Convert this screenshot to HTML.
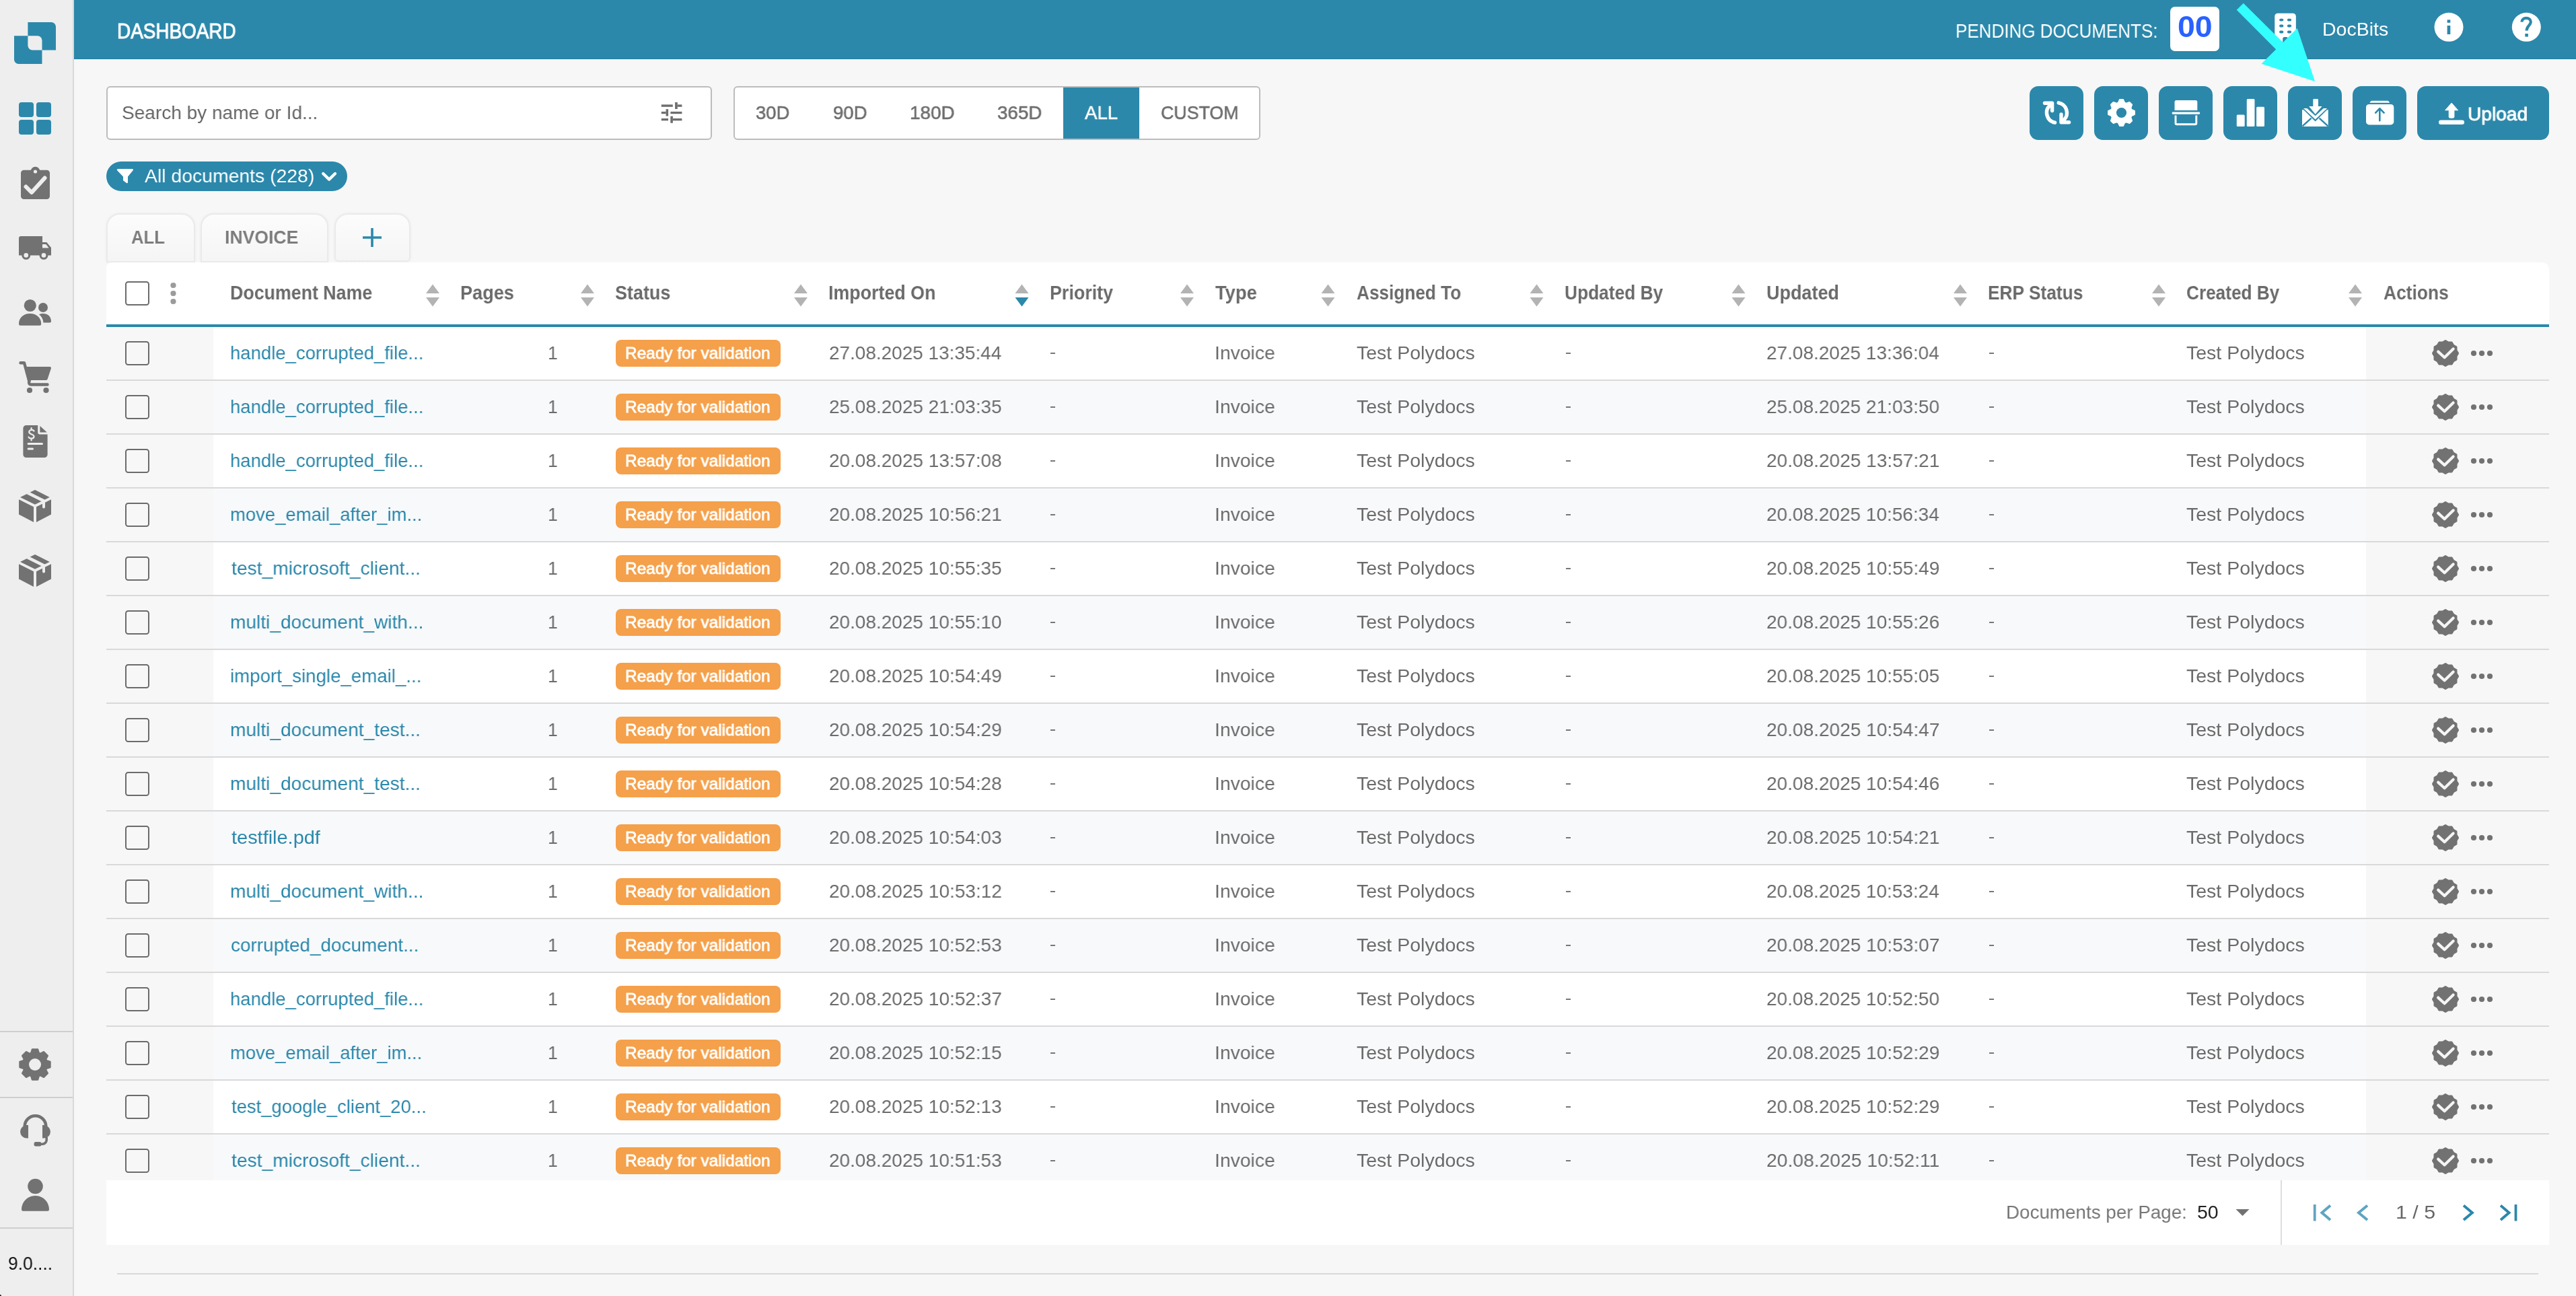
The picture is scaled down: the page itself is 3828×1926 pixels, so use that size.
<!DOCTYPE html>
<html><head><meta charset="utf-8"><title>Dashboard</title>
<style>
html,body{margin:0;padding:0;background:#f7f7f7;}
body{width:3828px;height:1926px;overflow:hidden;background:#f7f7f7;position:relative;font-family:"Liberation Sans",sans-serif;}
.r{position:absolute;box-sizing:border-box;}
.t{position:absolute;white-space:nowrap;transform-origin:0 50%;will-change:transform;font-family:"Liberation Sans",sans-serif;}
svg.ov{position:absolute;left:0;top:0;}
</style></head><body>
<div class="r" style="left:0px;top:0px;width:110px;height:1926px;background:#eeeeee;border-right:2px solid #d9d9d9;"></div>
<div class="r" style="left:0px;top:1532px;width:108px;height:2px;background:#cfcfcf;"></div>
<div class="r" style="left:0px;top:1630px;width:108px;height:2px;background:#cfcfcf;"></div>
<div class="r" style="left:0px;top:1824px;width:108px;height:2px;background:#cfcfcf;"></div>
<span class="t" style="left:11.78px;top:1865.14px;font-size:27px;line-height:27px;color:#111;transform:scaleX(0.9788);">9.0....</span>
<div class="r" style="left:110px;top:0px;width:3718px;height:88px;background:#2b88ab;"></div>
<div class="r" style="left:110px;top:87px;width:3718px;height:1px;background:#227fa3;"></div>
<span class="t" style="left:173.71px;top:31.01px;font-size:31px;line-height:31px;color:#fff;transform:scaleX(0.8994);-webkit-text-stroke:1.0px #fff;">DASHBOARD</span>
<span class="t" style="left:2905.62px;top:31.43px;font-size:29.5px;line-height:29.5px;color:#fff;transform:scaleX(0.8815);">PENDING DOCUMENTS:</span>
<div class="r" style="left:3225px;top:10px;width:73px;height:66px;background:#fff;border-radius:7px;"></div>
<span class="t" style="left:3235.69px;top:18.25px;font-size:44px;line-height:44px;color:#2962ff;font-weight:bold;transform:scaleX(1.0561);">00</span>
<span class="t" style="left:3451.17px;top:29.12px;font-size:28.5px;line-height:28.5px;color:#fff;transform:scaleX(0.9966);">DocBits</span>
<div class="r" style="left:158px;top:128px;width:900px;height:80px;background:#fff;border:2px solid #bcbcbc;border-radius:6px;"></div>
<span class="t" style="left:181.24px;top:152.87px;font-size:28.5px;line-height:28.5px;color:#666;transform:scaleX(0.9834);">Search by name or Id...</span>
<div class="r" style="left:1090px;top:128px;width:783px;height:80px;background:#fff;border:2px solid #bcbcbc;border-radius:6px;"></div>
<div class="r" style="left:1580px;top:130px;width:113px;height:76px;background:#2b88ab;"></div>
<span class="t" style="left:1123.46px;top:152.62px;font-size:28.5px;line-height:28.5px;color:#6e6e6e;transform:scaleX(0.9630);-webkit-text-stroke:0.6px #6e6e6e;">30D</span>
<span class="t" style="left:1237.73px;top:152.62px;font-size:28.5px;line-height:28.5px;color:#6e6e6e;transform:scaleX(0.9674);-webkit-text-stroke:0.6px #6e6e6e;">90D</span>
<span class="t" style="left:1351.63px;top:152.62px;font-size:28.5px;line-height:28.5px;color:#6e6e6e;transform:scaleX(0.9790);-webkit-text-stroke:0.6px #6e6e6e;">180D</span>
<span class="t" style="left:1481.94px;top:152.62px;font-size:28.5px;line-height:28.5px;color:#6e6e6e;transform:scaleX(0.9742);-webkit-text-stroke:0.6px #6e6e6e;">365D</span>
<span class="t" style="left:1612.44px;top:152.62px;font-size:28.5px;line-height:28.5px;color:#fff;transform:scaleX(0.9707);-webkit-text-stroke:0.6px #fff;">ALL</span>
<span class="t" style="left:1724.66px;top:152.62px;font-size:28.5px;line-height:28.5px;color:#6e6e6e;transform:scaleX(0.9395);-webkit-text-stroke:0.6px #6e6e6e;">CUSTOM</span>
<div class="r" style="left:3016px;top:128px;width:80px;height:80px;background:#2b88ab;border-radius:13px;"></div>
<div class="r" style="left:3112px;top:128px;width:80px;height:80px;background:#2b88ab;border-radius:13px;"></div>
<div class="r" style="left:3208px;top:128px;width:80px;height:80px;background:#2b88ab;border-radius:13px;"></div>
<div class="r" style="left:3304px;top:128px;width:80px;height:80px;background:#2b88ab;border-radius:13px;"></div>
<div class="r" style="left:3400px;top:128px;width:80px;height:80px;background:#2b88ab;border-radius:13px;"></div>
<div class="r" style="left:3496px;top:128px;width:80px;height:80px;background:#2b88ab;border-radius:13px;"></div>
<div class="r" style="left:3592px;top:128px;width:196px;height:80px;background:#2b88ab;border-radius:13px;"></div>
<span class="t" style="left:3667.23px;top:154.87px;font-size:28.5px;line-height:28.5px;color:#fff;transform:scaleX(0.9873);-webkit-text-stroke:0.9px #fff;">Upload</span>
<div class="r" style="left:158px;top:240px;width:358px;height:44px;background:#2b88ab;border-radius:22px;"></div>
<span class="t" style="left:214.94px;top:246.87px;font-size:28.5px;line-height:28.5px;color:#fff;transform:scaleX(0.9955);">All documents (228)</span>
<div class="r" style="left:158px;top:316.5px;width:131.5px;height:73.5px;background:;background:linear-gradient(#fcfcfc,#f5f5f5);border:2.5px solid #eaeaea;box-shadow:0 0 4px rgba(0,0,0,0.05);border-radius:20px 20px 0 0;"></div>
<div class="r" style="left:298px;top:316.5px;width:190px;height:73.5px;background:;background:linear-gradient(#fcfcfc,#f5f5f5);border:2.5px solid #eaeaea;box-shadow:0 0 4px rgba(0,0,0,0.05);border-radius:20px 20px 0 0;"></div>
<div class="r" style="left:496.5px;top:316.5px;width:113px;height:72px;background:;background:linear-gradient(#fcfcfc,#f5f5f5);border:2.5px solid #eaeaea;box-shadow:0 0 4px rgba(0,0,0,0.05);border-radius:20px 20px 6px 6px;"></div>
<span class="t" style="left:195.38px;top:338.27px;font-size:28.5px;line-height:28.5px;color:#7c7c7c;font-weight:bold;transform:scaleX(0.9004);">ALL</span>
<span class="t" style="left:334.25px;top:338.27px;font-size:28.5px;line-height:28.5px;color:#7c7c7c;font-weight:bold;transform:scaleX(0.9326);">INVOICE</span>
<div class="r" style="left:158px;top:390px;width:3630px;height:92px;background:#fff;border-radius:8px 10px 0 0;"></div>
<div class="r" style="left:158px;top:482px;width:3630px;height:4px;background:#2b88ab;"></div>
<span class="t" style="left:342.23px;top:420.55px;font-size:29px;line-height:29px;color:#6a6a6a;font-weight:bold;transform:scaleX(0.9228);">Document Name</span>
<span class="t" style="left:684.21px;top:420.55px;font-size:29px;line-height:29px;color:#6a6a6a;font-weight:bold;transform:scaleX(0.9349);">Pages</span>
<span class="t" style="left:914.25px;top:420.55px;font-size:29px;line-height:29px;color:#6a6a6a;font-weight:bold;transform:scaleX(0.9290);">Status</span>
<span class="t" style="left:1231.23px;top:420.55px;font-size:29px;line-height:29px;color:#6a6a6a;font-weight:bold;transform:scaleX(0.9248);">Imported On</span>
<span class="t" style="left:1559.73px;top:420.55px;font-size:29px;line-height:29px;color:#6a6a6a;font-weight:bold;transform:scaleX(0.9249);">Priority</span>
<span class="t" style="left:1805.70px;top:420.55px;font-size:29px;line-height:29px;color:#6a6a6a;font-weight:bold;transform:scaleX(0.9419);">Type</span>
<span class="t" style="left:2015.87px;top:420.55px;font-size:29px;line-height:29px;color:#6a6a6a;font-weight:bold;transform:scaleX(0.9028);">Assigned To</span>
<span class="t" style="left:2324.92px;top:420.55px;font-size:29px;line-height:29px;color:#6a6a6a;font-weight:bold;transform:scaleX(0.9074);">Updated By</span>
<span class="t" style="left:2624.88px;top:420.55px;font-size:29px;line-height:29px;color:#6a6a6a;font-weight:bold;transform:scaleX(0.9302);">Updated</span>
<span class="t" style="left:2953.76px;top:420.55px;font-size:29px;line-height:29px;color:#6a6a6a;font-weight:bold;transform:scaleX(0.9069);">ERP Status</span>
<span class="t" style="left:3248.93px;top:420.55px;font-size:29px;line-height:29px;color:#6a6a6a;font-weight:bold;transform:scaleX(0.9026);">Created By</span>
<span class="t" style="left:3542.37px;top:420.55px;font-size:29px;line-height:29px;color:#6a6a6a;font-weight:bold;transform:scaleX(0.9092);">Actions</span>
<div class="r" style="left:186px;top:418px;width:36px;height:36px;background:#fff;border:2.2px solid #6b6b6b;border-radius:4.5px;"></div>
<div class="r" style="left:158px;top:486px;width:3630px;height:1268px;overflow:hidden;">
<div class="r" style="left:0px;top:0px;width:3630px;height:78px;background:#fff;"></div>
<div class="r" style="left:0px;top:78px;width:3630px;height:2px;background:#d9d9da;"></div>
<div class="r" style="left:0px;top:0px;width:159px;height:78px;background:#f7f7f7;"></div>
<div class="r" style="left:3358px;top:0px;width:272px;height:78px;background:#f7f7f7;"></div>
<div class="r" style="left:28px;top:21.1px;width:36px;height:35.8px;background:transparent;border:2.2px solid #6b6b6b;border-radius:4.5px;"></div>
<div class="r" style="left:757px;top:19px;width:245px;height:40px;background:#f5a04a;border-radius:8px;"></div>
<div class="r" style="left:0px;top:80px;width:3630px;height:78px;background:#f8f9fb;"></div>
<div class="r" style="left:0px;top:158px;width:3630px;height:2px;background:#d9d9da;"></div>
<div class="r" style="left:0px;top:80px;width:159px;height:78px;background:#f7f7f7;"></div>
<div class="r" style="left:3358px;top:80px;width:272px;height:78px;background:#f7f7f7;"></div>
<div class="r" style="left:28px;top:101.1px;width:36px;height:35.8px;background:transparent;border:2.2px solid #6b6b6b;border-radius:4.5px;"></div>
<div class="r" style="left:757px;top:99px;width:245px;height:40px;background:#f5a04a;border-radius:8px;"></div>
<div class="r" style="left:0px;top:160px;width:3630px;height:78px;background:#fff;"></div>
<div class="r" style="left:0px;top:238px;width:3630px;height:2px;background:#d9d9da;"></div>
<div class="r" style="left:0px;top:160px;width:159px;height:78px;background:#f7f7f7;"></div>
<div class="r" style="left:3358px;top:160px;width:272px;height:78px;background:#f7f7f7;"></div>
<div class="r" style="left:28px;top:181.1px;width:36px;height:35.8px;background:transparent;border:2.2px solid #6b6b6b;border-radius:4.5px;"></div>
<div class="r" style="left:757px;top:179px;width:245px;height:40px;background:#f5a04a;border-radius:8px;"></div>
<div class="r" style="left:0px;top:240px;width:3630px;height:78px;background:#f8f9fb;"></div>
<div class="r" style="left:0px;top:318px;width:3630px;height:2px;background:#d9d9da;"></div>
<div class="r" style="left:0px;top:240px;width:159px;height:78px;background:#f7f7f7;"></div>
<div class="r" style="left:3358px;top:240px;width:272px;height:78px;background:#f7f7f7;"></div>
<div class="r" style="left:28px;top:261.1px;width:36px;height:35.8px;background:transparent;border:2.2px solid #6b6b6b;border-radius:4.5px;"></div>
<div class="r" style="left:757px;top:259px;width:245px;height:40px;background:#f5a04a;border-radius:8px;"></div>
<div class="r" style="left:0px;top:320px;width:3630px;height:78px;background:#fff;"></div>
<div class="r" style="left:0px;top:398px;width:3630px;height:2px;background:#d9d9da;"></div>
<div class="r" style="left:0px;top:320px;width:159px;height:78px;background:#f7f7f7;"></div>
<div class="r" style="left:3358px;top:320px;width:272px;height:78px;background:#f7f7f7;"></div>
<div class="r" style="left:28px;top:341.1px;width:36px;height:35.8px;background:transparent;border:2.2px solid #6b6b6b;border-radius:4.5px;"></div>
<div class="r" style="left:757px;top:339px;width:245px;height:40px;background:#f5a04a;border-radius:8px;"></div>
<div class="r" style="left:0px;top:400px;width:3630px;height:78px;background:#f8f9fb;"></div>
<div class="r" style="left:0px;top:478px;width:3630px;height:2px;background:#d9d9da;"></div>
<div class="r" style="left:0px;top:400px;width:159px;height:78px;background:#f7f7f7;"></div>
<div class="r" style="left:3358px;top:400px;width:272px;height:78px;background:#f7f7f7;"></div>
<div class="r" style="left:28px;top:421.1px;width:36px;height:35.8px;background:transparent;border:2.2px solid #6b6b6b;border-radius:4.5px;"></div>
<div class="r" style="left:757px;top:419px;width:245px;height:40px;background:#f5a04a;border-radius:8px;"></div>
<div class="r" style="left:0px;top:480px;width:3630px;height:78px;background:#fff;"></div>
<div class="r" style="left:0px;top:558px;width:3630px;height:2px;background:#d9d9da;"></div>
<div class="r" style="left:0px;top:480px;width:159px;height:78px;background:#f7f7f7;"></div>
<div class="r" style="left:3358px;top:480px;width:272px;height:78px;background:#f7f7f7;"></div>
<div class="r" style="left:28px;top:501.1px;width:36px;height:35.8px;background:transparent;border:2.2px solid #6b6b6b;border-radius:4.5px;"></div>
<div class="r" style="left:757px;top:499px;width:245px;height:40px;background:#f5a04a;border-radius:8px;"></div>
<div class="r" style="left:0px;top:560px;width:3630px;height:78px;background:#f8f9fb;"></div>
<div class="r" style="left:0px;top:638px;width:3630px;height:2px;background:#d9d9da;"></div>
<div class="r" style="left:0px;top:560px;width:159px;height:78px;background:#f7f7f7;"></div>
<div class="r" style="left:3358px;top:560px;width:272px;height:78px;background:#f7f7f7;"></div>
<div class="r" style="left:28px;top:581.1px;width:36px;height:35.8px;background:transparent;border:2.2px solid #6b6b6b;border-radius:4.5px;"></div>
<div class="r" style="left:757px;top:579px;width:245px;height:40px;background:#f5a04a;border-radius:8px;"></div>
<div class="r" style="left:0px;top:640px;width:3630px;height:78px;background:#fff;"></div>
<div class="r" style="left:0px;top:718px;width:3630px;height:2px;background:#d9d9da;"></div>
<div class="r" style="left:0px;top:640px;width:159px;height:78px;background:#f7f7f7;"></div>
<div class="r" style="left:3358px;top:640px;width:272px;height:78px;background:#f7f7f7;"></div>
<div class="r" style="left:28px;top:661.1px;width:36px;height:35.8px;background:transparent;border:2.2px solid #6b6b6b;border-radius:4.5px;"></div>
<div class="r" style="left:757px;top:659px;width:245px;height:40px;background:#f5a04a;border-radius:8px;"></div>
<div class="r" style="left:0px;top:720px;width:3630px;height:78px;background:#f8f9fb;"></div>
<div class="r" style="left:0px;top:798px;width:3630px;height:2px;background:#d9d9da;"></div>
<div class="r" style="left:0px;top:720px;width:159px;height:78px;background:#f7f7f7;"></div>
<div class="r" style="left:3358px;top:720px;width:272px;height:78px;background:#f7f7f7;"></div>
<div class="r" style="left:28px;top:741.1px;width:36px;height:35.8px;background:transparent;border:2.2px solid #6b6b6b;border-radius:4.5px;"></div>
<div class="r" style="left:757px;top:739px;width:245px;height:40px;background:#f5a04a;border-radius:8px;"></div>
<div class="r" style="left:0px;top:800px;width:3630px;height:78px;background:#fff;"></div>
<div class="r" style="left:0px;top:878px;width:3630px;height:2px;background:#d9d9da;"></div>
<div class="r" style="left:0px;top:800px;width:159px;height:78px;background:#f7f7f7;"></div>
<div class="r" style="left:3358px;top:800px;width:272px;height:78px;background:#f7f7f7;"></div>
<div class="r" style="left:28px;top:821.1px;width:36px;height:35.8px;background:transparent;border:2.2px solid #6b6b6b;border-radius:4.5px;"></div>
<div class="r" style="left:757px;top:819px;width:245px;height:40px;background:#f5a04a;border-radius:8px;"></div>
<div class="r" style="left:0px;top:880px;width:3630px;height:78px;background:#f8f9fb;"></div>
<div class="r" style="left:0px;top:958px;width:3630px;height:2px;background:#d9d9da;"></div>
<div class="r" style="left:0px;top:880px;width:159px;height:78px;background:#f7f7f7;"></div>
<div class="r" style="left:3358px;top:880px;width:272px;height:78px;background:#f7f7f7;"></div>
<div class="r" style="left:28px;top:901.1px;width:36px;height:35.8px;background:transparent;border:2.2px solid #6b6b6b;border-radius:4.5px;"></div>
<div class="r" style="left:757px;top:899px;width:245px;height:40px;background:#f5a04a;border-radius:8px;"></div>
<div class="r" style="left:0px;top:960px;width:3630px;height:78px;background:#fff;"></div>
<div class="r" style="left:0px;top:1038px;width:3630px;height:2px;background:#d9d9da;"></div>
<div class="r" style="left:0px;top:960px;width:159px;height:78px;background:#f7f7f7;"></div>
<div class="r" style="left:3358px;top:960px;width:272px;height:78px;background:#f7f7f7;"></div>
<div class="r" style="left:28px;top:981.1px;width:36px;height:35.8px;background:transparent;border:2.2px solid #6b6b6b;border-radius:4.5px;"></div>
<div class="r" style="left:757px;top:979px;width:245px;height:40px;background:#f5a04a;border-radius:8px;"></div>
<div class="r" style="left:0px;top:1040px;width:3630px;height:78px;background:#f8f9fb;"></div>
<div class="r" style="left:0px;top:1118px;width:3630px;height:2px;background:#d9d9da;"></div>
<div class="r" style="left:0px;top:1040px;width:159px;height:78px;background:#f7f7f7;"></div>
<div class="r" style="left:3358px;top:1040px;width:272px;height:78px;background:#f7f7f7;"></div>
<div class="r" style="left:28px;top:1061.1px;width:36px;height:35.8px;background:transparent;border:2.2px solid #6b6b6b;border-radius:4.5px;"></div>
<div class="r" style="left:757px;top:1059px;width:245px;height:40px;background:#f5a04a;border-radius:8px;"></div>
<div class="r" style="left:0px;top:1120px;width:3630px;height:78px;background:#fff;"></div>
<div class="r" style="left:0px;top:1198px;width:3630px;height:2px;background:#d9d9da;"></div>
<div class="r" style="left:0px;top:1120px;width:159px;height:78px;background:#f7f7f7;"></div>
<div class="r" style="left:3358px;top:1120px;width:272px;height:78px;background:#f7f7f7;"></div>
<div class="r" style="left:28px;top:1141.1px;width:36px;height:35.8px;background:transparent;border:2.2px solid #6b6b6b;border-radius:4.5px;"></div>
<div class="r" style="left:757px;top:1139px;width:245px;height:40px;background:#f5a04a;border-radius:8px;"></div>
<div class="r" style="left:0px;top:1200px;width:3630px;height:78px;background:#f8f9fb;"></div>
<div class="r" style="left:0px;top:1278px;width:3630px;height:2px;background:#d9d9da;"></div>
<div class="r" style="left:0px;top:1200px;width:159px;height:78px;background:#f7f7f7;"></div>
<div class="r" style="left:3358px;top:1200px;width:272px;height:78px;background:#f7f7f7;"></div>
<div class="r" style="left:28px;top:1221.1px;width:36px;height:35.8px;background:transparent;border:2.2px solid #6b6b6b;border-radius:4.5px;"></div>
<div class="r" style="left:757px;top:1219px;width:245px;height:40px;background:#f5a04a;border-radius:8px;"></div>
</div>
<span class="t" style="left:342.10px;top:510.37px;font-size:28.5px;line-height:28.5px;color:#2b88ab;transform:scaleX(0.9648);">handle_corrupted_file...</span>
<span class="t" style="left:813.98px;top:510.37px;font-size:28.5px;line-height:28.5px;color:#6b6b6b;transform:scaleX(0.9340);">1</span>
<span class="t" style="left:929.00px;top:512.76px;font-size:24.5px;line-height:24.5px;color:#fff;transform:scaleX(0.9955);-webkit-text-stroke:0.8px #fff;">Ready for validation</span>
<span class="t" style="left:1231.60px;top:510.37px;font-size:28.5px;line-height:28.5px;color:#6b6b6b;transform:scaleX(0.9798);">27.08.2025 13:35:44</span>
<div class="r" style="left:1560.5px;top:523.8px;width:7.4px;height:2.5px;background:#777;"></div>
<span class="t" style="left:1804.89px;top:510.37px;font-size:28.5px;line-height:28.5px;color:#6b6b6b;transform:scaleX(0.9941);">Invoice</span>
<span class="t" style="left:2015.87px;top:510.37px;font-size:28.5px;line-height:28.5px;color:#6b6b6b;">Test Polydocs</span>
<div class="r" style="left:2326.5px;top:523.8px;width:7.4px;height:2.5px;background:#777;"></div>
<span class="t" style="left:2625.10px;top:510.37px;font-size:28.5px;line-height:28.5px;color:#6b6b6b;transform:scaleX(0.9817);">27.08.2025 13:36:04</span>
<div class="r" style="left:2955.5px;top:523.8px;width:7.4px;height:2.5px;background:#777;"></div>
<span class="t" style="left:3249.37px;top:510.37px;font-size:28.5px;line-height:28.5px;color:#6b6b6b;">Test Polydocs</span>
<span class="t" style="left:342.10px;top:590.37px;font-size:28.5px;line-height:28.5px;color:#2b88ab;transform:scaleX(0.9648);">handle_corrupted_file...</span>
<span class="t" style="left:813.98px;top:590.37px;font-size:28.5px;line-height:28.5px;color:#6b6b6b;transform:scaleX(0.9340);">1</span>
<span class="t" style="left:929.00px;top:592.76px;font-size:24.5px;line-height:24.5px;color:#fff;transform:scaleX(0.9955);-webkit-text-stroke:0.8px #fff;">Ready for validation</span>
<span class="t" style="left:1231.60px;top:590.37px;font-size:28.5px;line-height:28.5px;color:#6b6b6b;transform:scaleX(0.9811);">25.08.2025 21:03:35</span>
<div class="r" style="left:1560.5px;top:603.8px;width:7.4px;height:2.5px;background:#777;"></div>
<span class="t" style="left:1804.89px;top:590.37px;font-size:28.5px;line-height:28.5px;color:#6b6b6b;transform:scaleX(0.9941);">Invoice</span>
<span class="t" style="left:2015.87px;top:590.37px;font-size:28.5px;line-height:28.5px;color:#6b6b6b;">Test Polydocs</span>
<div class="r" style="left:2326.5px;top:603.8px;width:7.4px;height:2.5px;background:#777;"></div>
<span class="t" style="left:2625.10px;top:590.37px;font-size:28.5px;line-height:28.5px;color:#6b6b6b;transform:scaleX(0.9827);">25.08.2025 21:03:50</span>
<div class="r" style="left:2955.5px;top:603.8px;width:7.4px;height:2.5px;background:#777;"></div>
<span class="t" style="left:3249.37px;top:590.37px;font-size:28.5px;line-height:28.5px;color:#6b6b6b;">Test Polydocs</span>
<span class="t" style="left:342.10px;top:670.37px;font-size:28.5px;line-height:28.5px;color:#2b88ab;transform:scaleX(0.9648);">handle_corrupted_file...</span>
<span class="t" style="left:813.98px;top:670.37px;font-size:28.5px;line-height:28.5px;color:#6b6b6b;transform:scaleX(0.9340);">1</span>
<span class="t" style="left:929.00px;top:672.76px;font-size:24.5px;line-height:24.5px;color:#fff;transform:scaleX(0.9955);-webkit-text-stroke:0.8px #fff;">Ready for validation</span>
<span class="t" style="left:1231.60px;top:670.37px;font-size:28.5px;line-height:28.5px;color:#6b6b6b;transform:scaleX(0.9813);">20.08.2025 13:57:08</span>
<div class="r" style="left:1560.5px;top:683.8px;width:7.4px;height:2.5px;background:#777;"></div>
<span class="t" style="left:1804.89px;top:670.37px;font-size:28.5px;line-height:28.5px;color:#6b6b6b;transform:scaleX(0.9941);">Invoice</span>
<span class="t" style="left:2015.87px;top:670.37px;font-size:28.5px;line-height:28.5px;color:#6b6b6b;">Test Polydocs</span>
<div class="r" style="left:2326.5px;top:683.8px;width:7.4px;height:2.5px;background:#777;"></div>
<span class="t" style="left:2625.10px;top:670.37px;font-size:28.5px;line-height:28.5px;color:#6b6b6b;transform:scaleX(0.9838);">20.08.2025 13:57:21</span>
<div class="r" style="left:2955.5px;top:683.8px;width:7.4px;height:2.5px;background:#777;"></div>
<span class="t" style="left:3249.37px;top:670.37px;font-size:28.5px;line-height:28.5px;color:#6b6b6b;">Test Polydocs</span>
<span class="t" style="left:342.19px;top:750.37px;font-size:28.5px;line-height:28.5px;color:#2b88ab;transform:scaleX(0.9632);">move_email_after_im...</span>
<span class="t" style="left:813.98px;top:750.37px;font-size:28.5px;line-height:28.5px;color:#6b6b6b;transform:scaleX(0.9340);">1</span>
<span class="t" style="left:929.00px;top:752.76px;font-size:24.5px;line-height:24.5px;color:#fff;transform:scaleX(0.9955);-webkit-text-stroke:0.8px #fff;">Ready for validation</span>
<span class="t" style="left:1231.60px;top:750.37px;font-size:28.5px;line-height:28.5px;color:#6b6b6b;transform:scaleX(0.9819);">20.08.2025 10:56:21</span>
<div class="r" style="left:1560.5px;top:763.8px;width:7.4px;height:2.5px;background:#777;"></div>
<span class="t" style="left:1804.89px;top:750.37px;font-size:28.5px;line-height:28.5px;color:#6b6b6b;transform:scaleX(0.9941);">Invoice</span>
<span class="t" style="left:2015.87px;top:750.37px;font-size:28.5px;line-height:28.5px;color:#6b6b6b;">Test Polydocs</span>
<div class="r" style="left:2326.5px;top:763.8px;width:7.4px;height:2.5px;background:#777;"></div>
<span class="t" style="left:2625.10px;top:750.37px;font-size:28.5px;line-height:28.5px;color:#6b6b6b;transform:scaleX(0.9817);">20.08.2025 10:56:34</span>
<div class="r" style="left:2955.5px;top:763.8px;width:7.4px;height:2.5px;background:#777;"></div>
<span class="t" style="left:3249.37px;top:750.37px;font-size:28.5px;line-height:28.5px;color:#6b6b6b;">Test Polydocs</span>
<span class="t" style="left:343.58px;top:830.37px;font-size:28.5px;line-height:28.5px;color:#2b88ab;transform:scaleX(0.9911);">test_microsoft_client...</span>
<span class="t" style="left:813.98px;top:830.37px;font-size:28.5px;line-height:28.5px;color:#6b6b6b;transform:scaleX(0.9340);">1</span>
<span class="t" style="left:929.00px;top:832.76px;font-size:24.5px;line-height:24.5px;color:#fff;transform:scaleX(0.9955);-webkit-text-stroke:0.8px #fff;">Ready for validation</span>
<span class="t" style="left:1231.60px;top:830.37px;font-size:28.5px;line-height:28.5px;color:#6b6b6b;transform:scaleX(0.9811);">20.08.2025 10:55:35</span>
<div class="r" style="left:1560.5px;top:843.8px;width:7.4px;height:2.5px;background:#777;"></div>
<span class="t" style="left:1804.89px;top:830.37px;font-size:28.5px;line-height:28.5px;color:#6b6b6b;transform:scaleX(0.9941);">Invoice</span>
<span class="t" style="left:2015.87px;top:830.37px;font-size:28.5px;line-height:28.5px;color:#6b6b6b;">Test Polydocs</span>
<div class="r" style="left:2326.5px;top:843.8px;width:7.4px;height:2.5px;background:#777;"></div>
<span class="t" style="left:2625.10px;top:830.37px;font-size:28.5px;line-height:28.5px;color:#6b6b6b;transform:scaleX(0.9837);">20.08.2025 10:55:49</span>
<div class="r" style="left:2955.5px;top:843.8px;width:7.4px;height:2.5px;background:#777;"></div>
<span class="t" style="left:3249.37px;top:830.37px;font-size:28.5px;line-height:28.5px;color:#6b6b6b;">Test Polydocs</span>
<span class="t" style="left:342.15px;top:910.37px;font-size:28.5px;line-height:28.5px;color:#2b88ab;transform:scaleX(0.9861);">multi_document_with...</span>
<span class="t" style="left:813.98px;top:910.37px;font-size:28.5px;line-height:28.5px;color:#6b6b6b;transform:scaleX(0.9340);">1</span>
<span class="t" style="left:929.00px;top:912.76px;font-size:24.5px;line-height:24.5px;color:#fff;transform:scaleX(0.9955);-webkit-text-stroke:0.8px #fff;">Ready for validation</span>
<span class="t" style="left:1231.60px;top:910.37px;font-size:28.5px;line-height:28.5px;color:#6b6b6b;transform:scaleX(0.9808);">20.08.2025 10:55:10</span>
<div class="r" style="left:1560.5px;top:923.8px;width:7.4px;height:2.5px;background:#777;"></div>
<span class="t" style="left:1804.89px;top:910.37px;font-size:28.5px;line-height:28.5px;color:#6b6b6b;transform:scaleX(0.9941);">Invoice</span>
<span class="t" style="left:2015.87px;top:910.37px;font-size:28.5px;line-height:28.5px;color:#6b6b6b;">Test Polydocs</span>
<div class="r" style="left:2326.5px;top:923.8px;width:7.4px;height:2.5px;background:#777;"></div>
<span class="t" style="left:2625.10px;top:910.37px;font-size:28.5px;line-height:28.5px;color:#6b6b6b;transform:scaleX(0.9832);">20.08.2025 10:55:26</span>
<div class="r" style="left:2955.5px;top:923.8px;width:7.4px;height:2.5px;background:#777;"></div>
<span class="t" style="left:3249.37px;top:910.37px;font-size:28.5px;line-height:28.5px;color:#6b6b6b;">Test Polydocs</span>
<span class="t" style="left:342.17px;top:990.37px;font-size:28.5px;line-height:28.5px;color:#2b88ab;transform:scaleX(0.9702);">import_single_email_...</span>
<span class="t" style="left:813.98px;top:990.37px;font-size:28.5px;line-height:28.5px;color:#6b6b6b;transform:scaleX(0.9340);">1</span>
<span class="t" style="left:929.00px;top:992.76px;font-size:24.5px;line-height:24.5px;color:#fff;transform:scaleX(0.9955);-webkit-text-stroke:0.8px #fff;">Ready for validation</span>
<span class="t" style="left:1231.60px;top:990.37px;font-size:28.5px;line-height:28.5px;color:#6b6b6b;transform:scaleX(0.9817);">20.08.2025 10:54:49</span>
<div class="r" style="left:1560.5px;top:1003.8px;width:7.4px;height:2.5px;background:#777;"></div>
<span class="t" style="left:1804.89px;top:990.37px;font-size:28.5px;line-height:28.5px;color:#6b6b6b;transform:scaleX(0.9941);">Invoice</span>
<span class="t" style="left:2015.87px;top:990.37px;font-size:28.5px;line-height:28.5px;color:#6b6b6b;">Test Polydocs</span>
<div class="r" style="left:2326.5px;top:1003.8px;width:7.4px;height:2.5px;background:#777;"></div>
<span class="t" style="left:2625.10px;top:990.37px;font-size:28.5px;line-height:28.5px;color:#6b6b6b;transform:scaleX(0.9830);">20.08.2025 10:55:05</span>
<div class="r" style="left:2955.5px;top:1003.8px;width:7.4px;height:2.5px;background:#777;"></div>
<span class="t" style="left:3249.37px;top:990.37px;font-size:28.5px;line-height:28.5px;color:#6b6b6b;">Test Polydocs</span>
<span class="t" style="left:342.14px;top:1070.37px;font-size:28.5px;line-height:28.5px;color:#2b88ab;transform:scaleX(0.9870);">multi_document_test...</span>
<span class="t" style="left:813.98px;top:1070.37px;font-size:28.5px;line-height:28.5px;color:#6b6b6b;transform:scaleX(0.9340);">1</span>
<span class="t" style="left:929.00px;top:1072.76px;font-size:24.5px;line-height:24.5px;color:#fff;transform:scaleX(0.9955);-webkit-text-stroke:0.8px #fff;">Ready for validation</span>
<span class="t" style="left:1231.60px;top:1070.37px;font-size:28.5px;line-height:28.5px;color:#6b6b6b;transform:scaleX(0.9817);">20.08.2025 10:54:29</span>
<div class="r" style="left:1560.5px;top:1083.8px;width:7.4px;height:2.5px;background:#777;"></div>
<span class="t" style="left:1804.89px;top:1070.37px;font-size:28.5px;line-height:28.5px;color:#6b6b6b;transform:scaleX(0.9941);">Invoice</span>
<span class="t" style="left:2015.87px;top:1070.37px;font-size:28.5px;line-height:28.5px;color:#6b6b6b;">Test Polydocs</span>
<div class="r" style="left:2326.5px;top:1083.8px;width:7.4px;height:2.5px;background:#777;"></div>
<span class="t" style="left:2625.10px;top:1070.37px;font-size:28.5px;line-height:28.5px;color:#6b6b6b;transform:scaleX(0.9840);">20.08.2025 10:54:47</span>
<div class="r" style="left:2955.5px;top:1083.8px;width:7.4px;height:2.5px;background:#777;"></div>
<span class="t" style="left:3249.37px;top:1070.37px;font-size:28.5px;line-height:28.5px;color:#6b6b6b;">Test Polydocs</span>
<span class="t" style="left:342.14px;top:1150.37px;font-size:28.5px;line-height:28.5px;color:#2b88ab;transform:scaleX(0.9870);">multi_document_test...</span>
<span class="t" style="left:813.98px;top:1150.37px;font-size:28.5px;line-height:28.5px;color:#6b6b6b;transform:scaleX(0.9340);">1</span>
<span class="t" style="left:929.00px;top:1152.76px;font-size:24.5px;line-height:24.5px;color:#fff;transform:scaleX(0.9955);-webkit-text-stroke:0.8px #fff;">Ready for validation</span>
<span class="t" style="left:1231.60px;top:1150.37px;font-size:28.5px;line-height:28.5px;color:#6b6b6b;transform:scaleX(0.9813);">20.08.2025 10:54:28</span>
<div class="r" style="left:1560.5px;top:1163.8px;width:7.4px;height:2.5px;background:#777;"></div>
<span class="t" style="left:1804.89px;top:1150.37px;font-size:28.5px;line-height:28.5px;color:#6b6b6b;transform:scaleX(0.9941);">Invoice</span>
<span class="t" style="left:2015.87px;top:1150.37px;font-size:28.5px;line-height:28.5px;color:#6b6b6b;">Test Polydocs</span>
<div class="r" style="left:2326.5px;top:1163.8px;width:7.4px;height:2.5px;background:#777;"></div>
<span class="t" style="left:2625.10px;top:1150.37px;font-size:28.5px;line-height:28.5px;color:#6b6b6b;transform:scaleX(0.9832);">20.08.2025 10:54:46</span>
<div class="r" style="left:2955.5px;top:1163.8px;width:7.4px;height:2.5px;background:#777;"></div>
<span class="t" style="left:3249.37px;top:1150.37px;font-size:28.5px;line-height:28.5px;color:#6b6b6b;">Test Polydocs</span>
<span class="t" style="left:343.57px;top:1230.37px;font-size:28.5px;line-height:28.5px;color:#2b88ab;transform:scaleX(1.0152);">testfile.pdf</span>
<span class="t" style="left:813.98px;top:1230.37px;font-size:28.5px;line-height:28.5px;color:#6b6b6b;transform:scaleX(0.9340);">1</span>
<span class="t" style="left:929.00px;top:1232.76px;font-size:24.5px;line-height:24.5px;color:#fff;transform:scaleX(0.9955);-webkit-text-stroke:0.8px #fff;">Ready for validation</span>
<span class="t" style="left:1231.60px;top:1230.37px;font-size:28.5px;line-height:28.5px;color:#6b6b6b;transform:scaleX(0.9813);">20.08.2025 10:54:03</span>
<div class="r" style="left:1560.5px;top:1243.8px;width:7.4px;height:2.5px;background:#777;"></div>
<span class="t" style="left:1804.89px;top:1230.37px;font-size:28.5px;line-height:28.5px;color:#6b6b6b;transform:scaleX(0.9941);">Invoice</span>
<span class="t" style="left:2015.87px;top:1230.37px;font-size:28.5px;line-height:28.5px;color:#6b6b6b;">Test Polydocs</span>
<div class="r" style="left:2326.5px;top:1243.8px;width:7.4px;height:2.5px;background:#777;"></div>
<span class="t" style="left:2625.10px;top:1230.37px;font-size:28.5px;line-height:28.5px;color:#6b6b6b;transform:scaleX(0.9838);">20.08.2025 10:54:21</span>
<div class="r" style="left:2955.5px;top:1243.8px;width:7.4px;height:2.5px;background:#777;"></div>
<span class="t" style="left:3249.37px;top:1230.37px;font-size:28.5px;line-height:28.5px;color:#6b6b6b;">Test Polydocs</span>
<span class="t" style="left:342.15px;top:1310.37px;font-size:28.5px;line-height:28.5px;color:#2b88ab;transform:scaleX(0.9861);">multi_document_with...</span>
<span class="t" style="left:813.98px;top:1310.37px;font-size:28.5px;line-height:28.5px;color:#6b6b6b;transform:scaleX(0.9340);">1</span>
<span class="t" style="left:929.00px;top:1312.76px;font-size:24.5px;line-height:24.5px;color:#fff;transform:scaleX(0.9955);-webkit-text-stroke:0.8px #fff;">Ready for validation</span>
<span class="t" style="left:1231.60px;top:1310.37px;font-size:28.5px;line-height:28.5px;color:#6b6b6b;transform:scaleX(0.9821);">20.08.2025 10:53:12</span>
<div class="r" style="left:1560.5px;top:1323.8px;width:7.4px;height:2.5px;background:#777;"></div>
<span class="t" style="left:1804.89px;top:1310.37px;font-size:28.5px;line-height:28.5px;color:#6b6b6b;transform:scaleX(0.9941);">Invoice</span>
<span class="t" style="left:2015.87px;top:1310.37px;font-size:28.5px;line-height:28.5px;color:#6b6b6b;">Test Polydocs</span>
<div class="r" style="left:2326.5px;top:1323.8px;width:7.4px;height:2.5px;background:#777;"></div>
<span class="t" style="left:2625.10px;top:1310.37px;font-size:28.5px;line-height:28.5px;color:#6b6b6b;transform:scaleX(0.9817);">20.08.2025 10:53:24</span>
<div class="r" style="left:2955.5px;top:1323.8px;width:7.4px;height:2.5px;background:#777;"></div>
<span class="t" style="left:3249.37px;top:1310.37px;font-size:28.5px;line-height:28.5px;color:#6b6b6b;">Test Polydocs</span>
<span class="t" style="left:342.83px;top:1390.37px;font-size:28.5px;line-height:28.5px;color:#2b88ab;transform:scaleX(0.9795);">corrupted_document...</span>
<span class="t" style="left:813.98px;top:1390.37px;font-size:28.5px;line-height:28.5px;color:#6b6b6b;transform:scaleX(0.9340);">1</span>
<span class="t" style="left:929.00px;top:1392.76px;font-size:24.5px;line-height:24.5px;color:#fff;transform:scaleX(0.9955);-webkit-text-stroke:0.8px #fff;">Ready for validation</span>
<span class="t" style="left:1231.60px;top:1390.37px;font-size:28.5px;line-height:28.5px;color:#6b6b6b;transform:scaleX(0.9813);">20.08.2025 10:52:53</span>
<div class="r" style="left:1560.5px;top:1403.8px;width:7.4px;height:2.5px;background:#777;"></div>
<span class="t" style="left:1804.89px;top:1390.37px;font-size:28.5px;line-height:28.5px;color:#6b6b6b;transform:scaleX(0.9941);">Invoice</span>
<span class="t" style="left:2015.87px;top:1390.37px;font-size:28.5px;line-height:28.5px;color:#6b6b6b;">Test Polydocs</span>
<div class="r" style="left:2326.5px;top:1403.8px;width:7.4px;height:2.5px;background:#777;"></div>
<span class="t" style="left:2625.10px;top:1390.37px;font-size:28.5px;line-height:28.5px;color:#6b6b6b;transform:scaleX(0.9840);">20.08.2025 10:53:07</span>
<div class="r" style="left:2955.5px;top:1403.8px;width:7.4px;height:2.5px;background:#777;"></div>
<span class="t" style="left:3249.37px;top:1390.37px;font-size:28.5px;line-height:28.5px;color:#6b6b6b;">Test Polydocs</span>
<span class="t" style="left:342.10px;top:1470.37px;font-size:28.5px;line-height:28.5px;color:#2b88ab;transform:scaleX(0.9648);">handle_corrupted_file...</span>
<span class="t" style="left:813.98px;top:1470.37px;font-size:28.5px;line-height:28.5px;color:#6b6b6b;transform:scaleX(0.9340);">1</span>
<span class="t" style="left:929.00px;top:1472.76px;font-size:24.5px;line-height:24.5px;color:#fff;transform:scaleX(0.9955);-webkit-text-stroke:0.8px #fff;">Ready for validation</span>
<span class="t" style="left:1231.60px;top:1470.37px;font-size:28.5px;line-height:28.5px;color:#6b6b6b;transform:scaleX(0.9821);">20.08.2025 10:52:37</span>
<div class="r" style="left:1560.5px;top:1483.8px;width:7.4px;height:2.5px;background:#777;"></div>
<span class="t" style="left:1804.89px;top:1470.37px;font-size:28.5px;line-height:28.5px;color:#6b6b6b;transform:scaleX(0.9941);">Invoice</span>
<span class="t" style="left:2015.87px;top:1470.37px;font-size:28.5px;line-height:28.5px;color:#6b6b6b;">Test Polydocs</span>
<div class="r" style="left:2326.5px;top:1483.8px;width:7.4px;height:2.5px;background:#777;"></div>
<span class="t" style="left:2625.10px;top:1470.37px;font-size:28.5px;line-height:28.5px;color:#6b6b6b;transform:scaleX(0.9827);">20.08.2025 10:52:50</span>
<div class="r" style="left:2955.5px;top:1483.8px;width:7.4px;height:2.5px;background:#777;"></div>
<span class="t" style="left:3249.37px;top:1470.37px;font-size:28.5px;line-height:28.5px;color:#6b6b6b;">Test Polydocs</span>
<span class="t" style="left:342.19px;top:1550.37px;font-size:28.5px;line-height:28.5px;color:#2b88ab;transform:scaleX(0.9632);">move_email_after_im...</span>
<span class="t" style="left:813.98px;top:1550.37px;font-size:28.5px;line-height:28.5px;color:#6b6b6b;transform:scaleX(0.9340);">1</span>
<span class="t" style="left:929.00px;top:1552.76px;font-size:24.5px;line-height:24.5px;color:#fff;transform:scaleX(0.9955);-webkit-text-stroke:0.8px #fff;">Ready for validation</span>
<span class="t" style="left:1231.60px;top:1550.37px;font-size:28.5px;line-height:28.5px;color:#6b6b6b;transform:scaleX(0.9811);">20.08.2025 10:52:15</span>
<div class="r" style="left:1560.5px;top:1563.8px;width:7.4px;height:2.5px;background:#777;"></div>
<span class="t" style="left:1804.89px;top:1550.37px;font-size:28.5px;line-height:28.5px;color:#6b6b6b;transform:scaleX(0.9941);">Invoice</span>
<span class="t" style="left:2015.87px;top:1550.37px;font-size:28.5px;line-height:28.5px;color:#6b6b6b;">Test Polydocs</span>
<div class="r" style="left:2326.5px;top:1563.8px;width:7.4px;height:2.5px;background:#777;"></div>
<span class="t" style="left:2625.10px;top:1550.37px;font-size:28.5px;line-height:28.5px;color:#6b6b6b;transform:scaleX(0.9837);">20.08.2025 10:52:29</span>
<div class="r" style="left:2955.5px;top:1563.8px;width:7.4px;height:2.5px;background:#777;"></div>
<span class="t" style="left:3249.37px;top:1550.37px;font-size:28.5px;line-height:28.5px;color:#6b6b6b;">Test Polydocs</span>
<span class="t" style="left:343.59px;top:1630.37px;font-size:28.5px;line-height:28.5px;color:#2b88ab;transform:scaleX(0.9622);">test_google_client_20...</span>
<span class="t" style="left:813.98px;top:1630.37px;font-size:28.5px;line-height:28.5px;color:#6b6b6b;transform:scaleX(0.9340);">1</span>
<span class="t" style="left:929.00px;top:1632.76px;font-size:24.5px;line-height:24.5px;color:#fff;transform:scaleX(0.9955);-webkit-text-stroke:0.8px #fff;">Ready for validation</span>
<span class="t" style="left:1231.60px;top:1630.37px;font-size:28.5px;line-height:28.5px;color:#6b6b6b;transform:scaleX(0.9813);">20.08.2025 10:52:13</span>
<div class="r" style="left:1560.5px;top:1643.8px;width:7.4px;height:2.5px;background:#777;"></div>
<span class="t" style="left:1804.89px;top:1630.37px;font-size:28.5px;line-height:28.5px;color:#6b6b6b;transform:scaleX(0.9941);">Invoice</span>
<span class="t" style="left:2015.87px;top:1630.37px;font-size:28.5px;line-height:28.5px;color:#6b6b6b;">Test Polydocs</span>
<div class="r" style="left:2326.5px;top:1643.8px;width:7.4px;height:2.5px;background:#777;"></div>
<span class="t" style="left:2625.10px;top:1630.37px;font-size:28.5px;line-height:28.5px;color:#6b6b6b;transform:scaleX(0.9837);">20.08.2025 10:52:29</span>
<div class="r" style="left:2955.5px;top:1643.8px;width:7.4px;height:2.5px;background:#777;"></div>
<span class="t" style="left:3249.37px;top:1630.37px;font-size:28.5px;line-height:28.5px;color:#6b6b6b;">Test Polydocs</span>
<span class="t" style="left:343.58px;top:1710.37px;font-size:28.5px;line-height:28.5px;color:#2b88ab;transform:scaleX(0.9911);">test_microsoft_client...</span>
<span class="t" style="left:813.98px;top:1710.37px;font-size:28.5px;line-height:28.5px;color:#6b6b6b;transform:scaleX(0.9340);">1</span>
<span class="t" style="left:929.00px;top:1712.76px;font-size:24.5px;line-height:24.5px;color:#fff;transform:scaleX(0.9955);-webkit-text-stroke:0.8px #fff;">Ready for validation</span>
<span class="t" style="left:1231.60px;top:1710.37px;font-size:28.5px;line-height:28.5px;color:#6b6b6b;transform:scaleX(0.9813);">20.08.2025 10:51:53</span>
<div class="r" style="left:1560.5px;top:1723.8px;width:7.4px;height:2.5px;background:#777;"></div>
<span class="t" style="left:1804.89px;top:1710.37px;font-size:28.5px;line-height:28.5px;color:#6b6b6b;transform:scaleX(0.9941);">Invoice</span>
<span class="t" style="left:2015.87px;top:1710.37px;font-size:28.5px;line-height:28.5px;color:#6b6b6b;">Test Polydocs</span>
<div class="r" style="left:2326.5px;top:1723.8px;width:7.4px;height:2.5px;background:#777;"></div>
<span class="t" style="left:2625.09px;top:1710.37px;font-size:28.5px;line-height:28.5px;color:#6b6b6b;transform:scaleX(0.9919);">20.08.2025 10:52:11</span>
<div class="r" style="left:2955.5px;top:1723.8px;width:7.4px;height:2.5px;background:#777;"></div>
<span class="t" style="left:3249.37px;top:1710.37px;font-size:28.5px;line-height:28.5px;color:#6b6b6b;">Test Polydocs</span>
<div class="r" style="left:158px;top:1754px;width:3630px;height:96px;background:#fff;"></div>
<div class="r" style="left:3389px;top:1754px;width:2px;height:96px;background:#dddddd;"></div>
<span class="t" style="left:2981.22px;top:1786.87px;font-size:28.5px;line-height:28.5px;color:#757575;transform:scaleX(0.9752);">Documents per Page:</span>
<span class="t" style="left:3265.37px;top:1786.87px;font-size:28.5px;line-height:28.5px;color:#222;transform:scaleX(0.9943);">50</span>
<span class="t" style="left:3559.69px;top:1786.87px;font-size:28.5px;line-height:28.5px;color:#666;transform:scaleX(1.0647);">1 / 5</span>
<div class="r" style="left:174px;top:1892px;width:3598px;height:2px;background:#d8d8d8;"></div>
<svg class="ov" width="3828" height="1926" viewBox="0 0 3828 1926">
<path d="M633 436 L643 422.5 L653 436 Z" fill="#b3b3b3"/>
<path d="M633 442 L643 455.5 L653 442 Z" fill="#b3b3b3"/>
<path d="M863 436 L873 422.5 L883 436 Z" fill="#b3b3b3"/>
<path d="M863 442 L873 455.5 L883 442 Z" fill="#b3b3b3"/>
<path d="M1180 436 L1190 422.5 L1200 436 Z" fill="#b3b3b3"/>
<path d="M1180 442 L1190 455.5 L1200 442 Z" fill="#b3b3b3"/>
<path d="M1508.5 436 L1518.5 422.5 L1528.5 436 Z" fill="#b3b3b3"/>
<path d="M1508.5 442 L1518.5 455.5 L1528.5 442 Z" fill="#2b88ab"/>
<path d="M1754 436 L1764 422.5 L1774 436 Z" fill="#b3b3b3"/>
<path d="M1754 442 L1764 455.5 L1774 442 Z" fill="#b3b3b3"/>
<path d="M1963.5 436 L1973.5 422.5 L1983.5 436 Z" fill="#b3b3b3"/>
<path d="M1963.5 442 L1973.5 455.5 L1983.5 442 Z" fill="#b3b3b3"/>
<path d="M2273.5 436 L2283.5 422.5 L2293.5 436 Z" fill="#b3b3b3"/>
<path d="M2273.5 442 L2283.5 455.5 L2293.5 442 Z" fill="#b3b3b3"/>
<path d="M2573.5 436 L2583.5 422.5 L2593.5 436 Z" fill="#b3b3b3"/>
<path d="M2573.5 442 L2583.5 455.5 L2593.5 442 Z" fill="#b3b3b3"/>
<path d="M2903 436 L2913 422.5 L2923 436 Z" fill="#b3b3b3"/>
<path d="M2903 442 L2913 455.5 L2923 442 Z" fill="#b3b3b3"/>
<path d="M3198 436 L3208 422.5 L3218 436 Z" fill="#b3b3b3"/>
<path d="M3198 442 L3208 455.5 L3218 442 Z" fill="#b3b3b3"/>
<path d="M3490 436 L3500 422.5 L3510 436 Z" fill="#b3b3b3"/>
<path d="M3490 442 L3500 455.5 L3510 442 Z" fill="#b3b3b3"/>
<circle cx="257.5" cy="424" r="4.1" fill="#9b9b9b"/>
<circle cx="257.5" cy="436" r="4.1" fill="#9b9b9b"/>
<circle cx="257.5" cy="448" r="4.1" fill="#9b9b9b"/>
<path d="M3634.00 506.30 L3638.35 508.77 L3643.35 508.81 L3645.88 513.12 L3650.19 515.65 L3650.23 520.65 L3652.70 525.00 L3650.23 529.35 L3650.19 534.35 L3645.88 536.88 L3643.35 541.19 L3638.35 541.23 L3634.00 543.70 L3629.65 541.23 L3624.65 541.19 L3622.12 536.88 L3617.81 534.35 L3617.77 529.35 L3615.30 525.00 L3617.77 520.65 L3617.81 515.65 L3622.12 513.12 L3624.65 508.81 L3629.65 508.77 Z" fill="#727272" stroke="#727272" stroke-width="2.6" stroke-linejoin="round"/>
<path d="M3623.2 522.6 L3632.6 531.2 L3645.6 518.4" fill="none" stroke="#f5f5f5" stroke-width="4.2" stroke-linecap="round" stroke-linejoin="round"/>
<circle cx="3676" cy="525" r="4.1" fill="#727272"/>
<circle cx="3688" cy="525" r="4.1" fill="#727272"/>
<circle cx="3700" cy="525" r="4.1" fill="#727272"/>
<path d="M3634.00 586.30 L3638.35 588.77 L3643.35 588.81 L3645.88 593.12 L3650.19 595.65 L3650.23 600.65 L3652.70 605.00 L3650.23 609.35 L3650.19 614.35 L3645.88 616.88 L3643.35 621.19 L3638.35 621.23 L3634.00 623.70 L3629.65 621.23 L3624.65 621.19 L3622.12 616.88 L3617.81 614.35 L3617.77 609.35 L3615.30 605.00 L3617.77 600.65 L3617.81 595.65 L3622.12 593.12 L3624.65 588.81 L3629.65 588.77 Z" fill="#727272" stroke="#727272" stroke-width="2.6" stroke-linejoin="round"/>
<path d="M3623.2 602.6 L3632.6 611.2 L3645.6 598.4" fill="none" stroke="#f5f5f5" stroke-width="4.2" stroke-linecap="round" stroke-linejoin="round"/>
<circle cx="3676" cy="605" r="4.1" fill="#727272"/>
<circle cx="3688" cy="605" r="4.1" fill="#727272"/>
<circle cx="3700" cy="605" r="4.1" fill="#727272"/>
<path d="M3634.00 666.30 L3638.35 668.77 L3643.35 668.81 L3645.88 673.12 L3650.19 675.65 L3650.23 680.65 L3652.70 685.00 L3650.23 689.35 L3650.19 694.35 L3645.88 696.88 L3643.35 701.19 L3638.35 701.23 L3634.00 703.70 L3629.65 701.23 L3624.65 701.19 L3622.12 696.88 L3617.81 694.35 L3617.77 689.35 L3615.30 685.00 L3617.77 680.65 L3617.81 675.65 L3622.12 673.12 L3624.65 668.81 L3629.65 668.77 Z" fill="#727272" stroke="#727272" stroke-width="2.6" stroke-linejoin="round"/>
<path d="M3623.2 682.6 L3632.6 691.2 L3645.6 678.4" fill="none" stroke="#f5f5f5" stroke-width="4.2" stroke-linecap="round" stroke-linejoin="round"/>
<circle cx="3676" cy="685" r="4.1" fill="#727272"/>
<circle cx="3688" cy="685" r="4.1" fill="#727272"/>
<circle cx="3700" cy="685" r="4.1" fill="#727272"/>
<path d="M3634.00 746.30 L3638.35 748.77 L3643.35 748.81 L3645.88 753.12 L3650.19 755.65 L3650.23 760.65 L3652.70 765.00 L3650.23 769.35 L3650.19 774.35 L3645.88 776.88 L3643.35 781.19 L3638.35 781.23 L3634.00 783.70 L3629.65 781.23 L3624.65 781.19 L3622.12 776.88 L3617.81 774.35 L3617.77 769.35 L3615.30 765.00 L3617.77 760.65 L3617.81 755.65 L3622.12 753.12 L3624.65 748.81 L3629.65 748.77 Z" fill="#727272" stroke="#727272" stroke-width="2.6" stroke-linejoin="round"/>
<path d="M3623.2 762.6 L3632.6 771.2 L3645.6 758.4" fill="none" stroke="#f5f5f5" stroke-width="4.2" stroke-linecap="round" stroke-linejoin="round"/>
<circle cx="3676" cy="765" r="4.1" fill="#727272"/>
<circle cx="3688" cy="765" r="4.1" fill="#727272"/>
<circle cx="3700" cy="765" r="4.1" fill="#727272"/>
<path d="M3634.00 826.30 L3638.35 828.77 L3643.35 828.81 L3645.88 833.12 L3650.19 835.65 L3650.23 840.65 L3652.70 845.00 L3650.23 849.35 L3650.19 854.35 L3645.88 856.88 L3643.35 861.19 L3638.35 861.23 L3634.00 863.70 L3629.65 861.23 L3624.65 861.19 L3622.12 856.88 L3617.81 854.35 L3617.77 849.35 L3615.30 845.00 L3617.77 840.65 L3617.81 835.65 L3622.12 833.12 L3624.65 828.81 L3629.65 828.77 Z" fill="#727272" stroke="#727272" stroke-width="2.6" stroke-linejoin="round"/>
<path d="M3623.2 842.6 L3632.6 851.2 L3645.6 838.4" fill="none" stroke="#f5f5f5" stroke-width="4.2" stroke-linecap="round" stroke-linejoin="round"/>
<circle cx="3676" cy="845" r="4.1" fill="#727272"/>
<circle cx="3688" cy="845" r="4.1" fill="#727272"/>
<circle cx="3700" cy="845" r="4.1" fill="#727272"/>
<path d="M3634.00 906.30 L3638.35 908.77 L3643.35 908.81 L3645.88 913.12 L3650.19 915.65 L3650.23 920.65 L3652.70 925.00 L3650.23 929.35 L3650.19 934.35 L3645.88 936.88 L3643.35 941.19 L3638.35 941.23 L3634.00 943.70 L3629.65 941.23 L3624.65 941.19 L3622.12 936.88 L3617.81 934.35 L3617.77 929.35 L3615.30 925.00 L3617.77 920.65 L3617.81 915.65 L3622.12 913.12 L3624.65 908.81 L3629.65 908.77 Z" fill="#727272" stroke="#727272" stroke-width="2.6" stroke-linejoin="round"/>
<path d="M3623.2 922.6 L3632.6 931.2 L3645.6 918.4" fill="none" stroke="#f5f5f5" stroke-width="4.2" stroke-linecap="round" stroke-linejoin="round"/>
<circle cx="3676" cy="925" r="4.1" fill="#727272"/>
<circle cx="3688" cy="925" r="4.1" fill="#727272"/>
<circle cx="3700" cy="925" r="4.1" fill="#727272"/>
<path d="M3634.00 986.30 L3638.35 988.77 L3643.35 988.81 L3645.88 993.12 L3650.19 995.65 L3650.23 1000.65 L3652.70 1005.00 L3650.23 1009.35 L3650.19 1014.35 L3645.88 1016.88 L3643.35 1021.19 L3638.35 1021.23 L3634.00 1023.70 L3629.65 1021.23 L3624.65 1021.19 L3622.12 1016.88 L3617.81 1014.35 L3617.77 1009.35 L3615.30 1005.00 L3617.77 1000.65 L3617.81 995.65 L3622.12 993.12 L3624.65 988.81 L3629.65 988.77 Z" fill="#727272" stroke="#727272" stroke-width="2.6" stroke-linejoin="round"/>
<path d="M3623.2 1002.6 L3632.6 1011.2 L3645.6 998.4" fill="none" stroke="#f5f5f5" stroke-width="4.2" stroke-linecap="round" stroke-linejoin="round"/>
<circle cx="3676" cy="1005" r="4.1" fill="#727272"/>
<circle cx="3688" cy="1005" r="4.1" fill="#727272"/>
<circle cx="3700" cy="1005" r="4.1" fill="#727272"/>
<path d="M3634.00 1066.30 L3638.35 1068.77 L3643.35 1068.81 L3645.88 1073.12 L3650.19 1075.65 L3650.23 1080.65 L3652.70 1085.00 L3650.23 1089.35 L3650.19 1094.35 L3645.88 1096.88 L3643.35 1101.19 L3638.35 1101.23 L3634.00 1103.70 L3629.65 1101.23 L3624.65 1101.19 L3622.12 1096.88 L3617.81 1094.35 L3617.77 1089.35 L3615.30 1085.00 L3617.77 1080.65 L3617.81 1075.65 L3622.12 1073.12 L3624.65 1068.81 L3629.65 1068.77 Z" fill="#727272" stroke="#727272" stroke-width="2.6" stroke-linejoin="round"/>
<path d="M3623.2 1082.6 L3632.6 1091.2 L3645.6 1078.4" fill="none" stroke="#f5f5f5" stroke-width="4.2" stroke-linecap="round" stroke-linejoin="round"/>
<circle cx="3676" cy="1085" r="4.1" fill="#727272"/>
<circle cx="3688" cy="1085" r="4.1" fill="#727272"/>
<circle cx="3700" cy="1085" r="4.1" fill="#727272"/>
<path d="M3634.00 1146.30 L3638.35 1148.77 L3643.35 1148.81 L3645.88 1153.12 L3650.19 1155.65 L3650.23 1160.65 L3652.70 1165.00 L3650.23 1169.35 L3650.19 1174.35 L3645.88 1176.88 L3643.35 1181.19 L3638.35 1181.23 L3634.00 1183.70 L3629.65 1181.23 L3624.65 1181.19 L3622.12 1176.88 L3617.81 1174.35 L3617.77 1169.35 L3615.30 1165.00 L3617.77 1160.65 L3617.81 1155.65 L3622.12 1153.12 L3624.65 1148.81 L3629.65 1148.77 Z" fill="#727272" stroke="#727272" stroke-width="2.6" stroke-linejoin="round"/>
<path d="M3623.2 1162.6 L3632.6 1171.2 L3645.6 1158.4" fill="none" stroke="#f5f5f5" stroke-width="4.2" stroke-linecap="round" stroke-linejoin="round"/>
<circle cx="3676" cy="1165" r="4.1" fill="#727272"/>
<circle cx="3688" cy="1165" r="4.1" fill="#727272"/>
<circle cx="3700" cy="1165" r="4.1" fill="#727272"/>
<path d="M3634.00 1226.30 L3638.35 1228.77 L3643.35 1228.81 L3645.88 1233.12 L3650.19 1235.65 L3650.23 1240.65 L3652.70 1245.00 L3650.23 1249.35 L3650.19 1254.35 L3645.88 1256.88 L3643.35 1261.19 L3638.35 1261.23 L3634.00 1263.70 L3629.65 1261.23 L3624.65 1261.19 L3622.12 1256.88 L3617.81 1254.35 L3617.77 1249.35 L3615.30 1245.00 L3617.77 1240.65 L3617.81 1235.65 L3622.12 1233.12 L3624.65 1228.81 L3629.65 1228.77 Z" fill="#727272" stroke="#727272" stroke-width="2.6" stroke-linejoin="round"/>
<path d="M3623.2 1242.6 L3632.6 1251.2 L3645.6 1238.4" fill="none" stroke="#f5f5f5" stroke-width="4.2" stroke-linecap="round" stroke-linejoin="round"/>
<circle cx="3676" cy="1245" r="4.1" fill="#727272"/>
<circle cx="3688" cy="1245" r="4.1" fill="#727272"/>
<circle cx="3700" cy="1245" r="4.1" fill="#727272"/>
<path d="M3634.00 1306.30 L3638.35 1308.77 L3643.35 1308.81 L3645.88 1313.12 L3650.19 1315.65 L3650.23 1320.65 L3652.70 1325.00 L3650.23 1329.35 L3650.19 1334.35 L3645.88 1336.88 L3643.35 1341.19 L3638.35 1341.23 L3634.00 1343.70 L3629.65 1341.23 L3624.65 1341.19 L3622.12 1336.88 L3617.81 1334.35 L3617.77 1329.35 L3615.30 1325.00 L3617.77 1320.65 L3617.81 1315.65 L3622.12 1313.12 L3624.65 1308.81 L3629.65 1308.77 Z" fill="#727272" stroke="#727272" stroke-width="2.6" stroke-linejoin="round"/>
<path d="M3623.2 1322.6 L3632.6 1331.2 L3645.6 1318.4" fill="none" stroke="#f5f5f5" stroke-width="4.2" stroke-linecap="round" stroke-linejoin="round"/>
<circle cx="3676" cy="1325" r="4.1" fill="#727272"/>
<circle cx="3688" cy="1325" r="4.1" fill="#727272"/>
<circle cx="3700" cy="1325" r="4.1" fill="#727272"/>
<path d="M3634.00 1386.30 L3638.35 1388.77 L3643.35 1388.81 L3645.88 1393.12 L3650.19 1395.65 L3650.23 1400.65 L3652.70 1405.00 L3650.23 1409.35 L3650.19 1414.35 L3645.88 1416.88 L3643.35 1421.19 L3638.35 1421.23 L3634.00 1423.70 L3629.65 1421.23 L3624.65 1421.19 L3622.12 1416.88 L3617.81 1414.35 L3617.77 1409.35 L3615.30 1405.00 L3617.77 1400.65 L3617.81 1395.65 L3622.12 1393.12 L3624.65 1388.81 L3629.65 1388.77 Z" fill="#727272" stroke="#727272" stroke-width="2.6" stroke-linejoin="round"/>
<path d="M3623.2 1402.6 L3632.6 1411.2 L3645.6 1398.4" fill="none" stroke="#f5f5f5" stroke-width="4.2" stroke-linecap="round" stroke-linejoin="round"/>
<circle cx="3676" cy="1405" r="4.1" fill="#727272"/>
<circle cx="3688" cy="1405" r="4.1" fill="#727272"/>
<circle cx="3700" cy="1405" r="4.1" fill="#727272"/>
<path d="M3634.00 1466.30 L3638.35 1468.77 L3643.35 1468.81 L3645.88 1473.12 L3650.19 1475.65 L3650.23 1480.65 L3652.70 1485.00 L3650.23 1489.35 L3650.19 1494.35 L3645.88 1496.88 L3643.35 1501.19 L3638.35 1501.23 L3634.00 1503.70 L3629.65 1501.23 L3624.65 1501.19 L3622.12 1496.88 L3617.81 1494.35 L3617.77 1489.35 L3615.30 1485.00 L3617.77 1480.65 L3617.81 1475.65 L3622.12 1473.12 L3624.65 1468.81 L3629.65 1468.77 Z" fill="#727272" stroke="#727272" stroke-width="2.6" stroke-linejoin="round"/>
<path d="M3623.2 1482.6 L3632.6 1491.2 L3645.6 1478.4" fill="none" stroke="#f5f5f5" stroke-width="4.2" stroke-linecap="round" stroke-linejoin="round"/>
<circle cx="3676" cy="1485" r="4.1" fill="#727272"/>
<circle cx="3688" cy="1485" r="4.1" fill="#727272"/>
<circle cx="3700" cy="1485" r="4.1" fill="#727272"/>
<path d="M3634.00 1546.30 L3638.35 1548.77 L3643.35 1548.81 L3645.88 1553.12 L3650.19 1555.65 L3650.23 1560.65 L3652.70 1565.00 L3650.23 1569.35 L3650.19 1574.35 L3645.88 1576.88 L3643.35 1581.19 L3638.35 1581.23 L3634.00 1583.70 L3629.65 1581.23 L3624.65 1581.19 L3622.12 1576.88 L3617.81 1574.35 L3617.77 1569.35 L3615.30 1565.00 L3617.77 1560.65 L3617.81 1555.65 L3622.12 1553.12 L3624.65 1548.81 L3629.65 1548.77 Z" fill="#727272" stroke="#727272" stroke-width="2.6" stroke-linejoin="round"/>
<path d="M3623.2 1562.6 L3632.6 1571.2 L3645.6 1558.4" fill="none" stroke="#f5f5f5" stroke-width="4.2" stroke-linecap="round" stroke-linejoin="round"/>
<circle cx="3676" cy="1565" r="4.1" fill="#727272"/>
<circle cx="3688" cy="1565" r="4.1" fill="#727272"/>
<circle cx="3700" cy="1565" r="4.1" fill="#727272"/>
<path d="M3634.00 1626.30 L3638.35 1628.77 L3643.35 1628.81 L3645.88 1633.12 L3650.19 1635.65 L3650.23 1640.65 L3652.70 1645.00 L3650.23 1649.35 L3650.19 1654.35 L3645.88 1656.88 L3643.35 1661.19 L3638.35 1661.23 L3634.00 1663.70 L3629.65 1661.23 L3624.65 1661.19 L3622.12 1656.88 L3617.81 1654.35 L3617.77 1649.35 L3615.30 1645.00 L3617.77 1640.65 L3617.81 1635.65 L3622.12 1633.12 L3624.65 1628.81 L3629.65 1628.77 Z" fill="#727272" stroke="#727272" stroke-width="2.6" stroke-linejoin="round"/>
<path d="M3623.2 1642.6 L3632.6 1651.2 L3645.6 1638.4" fill="none" stroke="#f5f5f5" stroke-width="4.2" stroke-linecap="round" stroke-linejoin="round"/>
<circle cx="3676" cy="1645" r="4.1" fill="#727272"/>
<circle cx="3688" cy="1645" r="4.1" fill="#727272"/>
<circle cx="3700" cy="1645" r="4.1" fill="#727272"/>
<path d="M3634.00 1706.30 L3638.35 1708.77 L3643.35 1708.81 L3645.88 1713.12 L3650.19 1715.65 L3650.23 1720.65 L3652.70 1725.00 L3650.23 1729.35 L3650.19 1734.35 L3645.88 1736.88 L3643.35 1741.19 L3638.35 1741.23 L3634.00 1743.70 L3629.65 1741.23 L3624.65 1741.19 L3622.12 1736.88 L3617.81 1734.35 L3617.77 1729.35 L3615.30 1725.00 L3617.77 1720.65 L3617.81 1715.65 L3622.12 1713.12 L3624.65 1708.81 L3629.65 1708.77 Z" fill="#727272" stroke="#727272" stroke-width="2.6" stroke-linejoin="round"/>
<path d="M3623.2 1722.6 L3632.6 1731.2 L3645.6 1718.4" fill="none" stroke="#f5f5f5" stroke-width="4.2" stroke-linecap="round" stroke-linejoin="round"/>
<circle cx="3676" cy="1725" r="4.1" fill="#727272"/>
<circle cx="3688" cy="1725" r="4.1" fill="#727272"/>
<circle cx="3700" cy="1725" r="4.1" fill="#727272"/>
<path d="M3322.5 1797 L3342.5 1797 L3332.5 1807 Z" fill="#727272"/>
<rect x="3437.8" y="1790" width="3.8" height="24.5" fill="#5fa5c0"/>
<path d="M3463 1791.5 L3450.4 1802.3 L3463 1813" fill="none" stroke="#5fa5c0" stroke-width="4"/>
<path d="M3518 1791.5 L3505 1802.3 L3518 1813" fill="none" stroke="#5fa5c0" stroke-width="4"/>
<path d="M3661 1791.5 L3673.8 1802.3 L3661 1813" fill="none" stroke="#2b88ab" stroke-width="4"/>
<path d="M3716 1791.5 L3728.5 1802.3 L3716 1813" fill="none" stroke="#2b88ab" stroke-width="4"/>
<rect x="3736.6" y="1790" width="3.8" height="24.5" fill="#2b88ab"/>
<circle cx="-0.6" cy="1926.6" r="2.8" fill="#2a1c10"/>
<path d="M41.4 33 H76.2 A6.8 6.8 0 0 1 83 39.8 V74.4 H62.5 V60 A6.75 6.75 0 0 0 55.75 53.25 H41.4 Z" fill="#2b88ab"/>
<path d="M21 53.25 H41.4 V67.6 A6.8 6.8 0 0 0 48.2 74.4 H62.5 V95 H27.5 A6.5 6.5 0 0 1 21 88.5 Z" fill="#2b88ab"/>
<rect x="28" y="152" width="22" height="22" rx="4" fill="#2b88ab"/>
<rect x="54" y="152" width="22" height="22" rx="4" fill="#2b88ab"/>
<rect x="28" y="178" width="22" height="22" rx="4" fill="#2b88ab"/>
<rect x="54" y="178" width="22" height="22" rx="4" fill="#2b88ab"/>
<rect x="31" y="252.75" width="43" height="43.25" rx="4.5" fill="#727272"/>
<circle cx="52.5" cy="254.6" r="6.8" fill="#727272"/>
<circle cx="52.5" cy="255" r="2.6" fill="#eeeeee"/>
<path d="M38.5 277.5 L47 286 L66.5 264.5" fill="none" stroke="#eeeeee" stroke-width="6" stroke-linecap="round" stroke-linejoin="round"/>
<path d="M31 351 H63 V360 H69.3 L76 368 V379.4 H28 V354 A3 3 0 0 1 31 351 Z" fill="#727272"/>
<path d="M63 363 H68.3 L72.6 368.6 H63 Z" fill="#eeeeee"/>
<circle cx="38.75" cy="379.4" r="6.4" fill="#727272"/>
<circle cx="38.75" cy="379.4" r="3.3" fill="#eeeeee"/>
<circle cx="65" cy="379.4" r="6.4" fill="#727272"/>
<circle cx="65" cy="379.4" r="3.3" fill="#eeeeee"/>
<circle cx="44.75" cy="454" r="9.1" fill="#727272"/>
<circle cx="64" cy="457" r="7" fill="#727272"/>
<path d="M28 481.5 C28 472 35 466 44.6 466 C54.2 466 61.25 472 61.25 481.5 A2.2 2.2 0 0 1 59 483.75 H30.2 A2.2 2.2 0 0 1 28 481.5 Z" fill="#727272"/>
<path d="M58 467.2 C60 466.3 62 466 64 466 C71 466 76 470.5 76 477.4 A2 2 0 0 1 74 479.4 H64.4 C64.2 474.5 62 470.3 58 467.2 Z" fill="#727272"/>
<path d="M30.5 539.3 H36 L43.2 566" fill="none" stroke="#727272" stroke-width="4.4" stroke-linecap="round" stroke-linejoin="round"/>
<path d="M38 545 H74 A2 2 0 0 1 75.9 547.6 L70.6 563.6 A2.2 2.2 0 0 1 68.5 565 H43 Z" fill="#727272"/>
<path d="M44 565 C42.5 567.5 42.5 571.5 46.5 571.5 H70.5" fill="none" stroke="#727272" stroke-width="4.4" stroke-linecap="round" stroke-linejoin="round"/>
<circle cx="44" cy="580" r="4.1" fill="#727272"/>
<circle cx="68.5" cy="580" r="4.1" fill="#727272"/>
<path d="M39 632 H56.2 V642.6 A3 3 0 0 0 59.2 645.6 H70.6 V675.4 A4.6 4.6 0 0 1 66 680 H39 A4.6 4.6 0 0 1 34.4 675.4 V636.6 A4.6 4.6 0 0 1 39 632 Z" fill="#727272"/>
<path d="M59.4 633 L69.8 642.5 H59.4 Z" fill="#727272"/>
<path d="M50.5 640.5 C49.5 638.6 44 638 43.2 641.5 C42.3 645.8 51 644.5 50.5 649 C50 652.6 43.8 652.2 42.6 649.6 M46.6 636 V638.3 M46.6 652 V654.4" fill="none" stroke="#eeeeee" stroke-width="2.2" stroke-linecap="round"/>
<rect x="40.6" y="658" width="23.4" height="3" rx="1.5" fill="#eeeeee"/>
<rect x="40.6" y="665.6" width="9.4" height="3" rx="1.5" fill="#eeeeee"/>
<path d="M52 728 L73.75 739 L52 749.75 L30 739 Z" fill="#727272"/>
<path d="M39.2 734.1 L44.4 731.5 L68.4 743.4 L63.2 746 Z" fill="#eeeeee"/>
<path d="M28 742.25 L50 753.2 V776 L28 764.4 Z" fill="#727272"/>
<path d="M54 753.2 L76 742.25 V764.4 L54 776 Z" fill="#727272"/>
<path d="M63 746.5 V753.6 A2 2 0 0 0 67 753.6 V744.5 Z" fill="#eeeeee"/>
<path d="M52 824 L73.75 835 L52 845.75 L30 835 Z" fill="#727272"/>
<path d="M39.2 830.1 L44.4 827.5 L68.4 839.4 L63.2 842 Z" fill="#eeeeee"/>
<path d="M28 838.25 L50 849.2 V872 L28 860.4 Z" fill="#727272"/>
<path d="M54 849.2 L76 838.25 V860.4 L54 872 Z" fill="#727272"/>
<path d="M63 842.5 V849.6 A2 2 0 0 0 67 849.6 V840.5 Z" fill="#eeeeee"/>
<path d="M46.07 1564.79 L47.79 1559.29 L56.21 1559.29 L57.93 1564.79 L59.98 1565.64 L65.08 1562.96 L71.04 1568.92 L68.36 1574.02 L69.21 1576.07 L74.71 1577.79 L74.71 1586.21 L69.21 1587.93 L68.36 1589.98 L71.04 1595.08 L65.08 1601.04 L59.98 1598.36 L57.93 1599.21 L56.21 1604.71 L47.79 1604.71 L46.07 1599.21 L44.02 1598.36 L38.92 1601.04 L32.96 1595.08 L35.64 1589.98 L34.79 1587.93 L29.29 1586.21 L29.29 1577.79 L34.79 1576.07 L35.64 1574.02 L32.96 1568.92 L38.92 1562.96 L44.02 1565.64 Z" fill="#727272" stroke="#727272" stroke-width="2" stroke-linejoin="round"/>
<circle cx="52" cy="1582" r="9" fill="#eeeeee"/>
<path d="M36.7 1674 A15.8 15.8 0 0 1 68.3 1674" fill="none" stroke="#727272" stroke-width="4.6"/>
<path d="M42 1672 V1691.6 H40 A10 9.8 0 0 1 40 1672 Z" fill="#727272"/>
<path d="M63 1672 V1691.6 H65 A10 9.8 0 0 0 65 1672 Z" fill="#727272"/>
<path d="M69.2 1690 V1694 A6.2 6.2 0 0 1 63 1700.2 H58" fill="none" stroke="#727272" stroke-width="3.6"/>
<rect x="50.6" y="1697" width="10.8" height="6.6" rx="2.4" fill="#727272"/>
<circle cx="52.5" cy="1763" r="11.3" fill="#727272"/>
<path d="M32 1797.4 C32 1786 41 1777 52.5 1777 C64 1777 73 1786 73 1797.4 A2.3 2.3 0 0 1 70.7 1799.75 H34.3 A2.3 2.3 0 0 1 32 1797.4 Z" fill="#727272"/>
<rect x="3380.25" y="19.75" width="31.6" height="42.6" rx="4.5" fill="#fff"/>
<rect x="3387.1" y="27.700000000000003" width="6.2" height="3.8" rx="1.9" fill="#2b88ab"/>
<rect x="3387.1" y="36.6" width="6.2" height="3.8" rx="1.9" fill="#2b88ab"/>
<rect x="3387.1" y="45.6" width="6.2" height="3.8" rx="1.9" fill="#2b88ab"/>
<rect x="3398.9" y="27.700000000000003" width="6.2" height="3.8" rx="1.9" fill="#2b88ab"/>
<rect x="3398.9" y="36.6" width="6.2" height="3.8" rx="1.9" fill="#2b88ab"/>
<rect x="3398.9" y="45.6" width="6.2" height="3.8" rx="1.9" fill="#2b88ab"/>
<path d="M3392.2 62.4 V57.5 A2.6 2.6 0 0 1 3394.8 54.9 H3397.4 A2.6 2.6 0 0 1 3400 57.5 V62.4 Z" fill="#2b88ab"/>
<circle cx="3639" cy="40.3" r="21.5" fill="#fff"/>
<rect x="3636.6" y="29.4" width="4.7" height="4.4" fill="#2b88ab"/>
<rect x="3636.6" y="38" width="4.7" height="13" fill="#2b88ab"/>
<circle cx="3754.3" cy="40.3" r="21.5" fill="#fff"/>
<path d="M3747.4 32.6 C3747.6 28.8 3750.4 26.8 3754 26.8 C3757.8 26.8 3760.8 29 3760.8 32.6 C3760.8 37.6 3754.6 38.6 3754.6 45.6" fill="none" stroke="#2b88ab" stroke-width="4.2"/>
<rect x="3752.3" y="50" width="4.6" height="4.6" fill="#2b88ab"/>
<path d="M3333.75 4.75 L3323.75 14.75 L3385 76.2 L3395 65.6 Z" fill="#33ffff"/>
<path d="M3413.75 41.9 L3360.6 94.75 L3440 121 Z" fill="#33ffff"/>
<rect x="982.8" y="155.4" width="17.00" height="3.40" fill="#6e6e6e"/>
<rect x="1003.1" y="152" width="3.70" height="10.00" fill="#6e6e6e"/>
<rect x="1006.8" y="155.4" width="6.60" height="3.40" fill="#6e6e6e"/>
<rect x="982.8" y="165.9" width="6.90" height="3.30" fill="#6e6e6e"/>
<rect x="989.6" y="162.2" width="3.50" height="10.30" fill="#6e6e6e"/>
<rect x="996.4" y="165.9" width="17.00" height="3.30" fill="#6e6e6e"/>
<rect x="982.8" y="176" width="10.20" height="3.30" fill="#6e6e6e"/>
<rect x="996.3" y="172.7" width="3.60" height="10.10" fill="#6e6e6e"/>
<rect x="999.9" y="176" width="13.50" height="3.30" fill="#6e6e6e"/>
<path d="M175.2 251 H196.6 A1.4 1.4 0 0 1 197.6 253.3 L190 262.6 V271 A1.2 1.2 0 0 1 188 271.9 L183.4 268.6 A1.2 1.2 0 0 1 183 267.8 V262.6 L174.2 253.3 A1.4 1.4 0 0 1 175.2 251 Z" fill="#fff"/>
<path d="M480.2 258 L489.1 266.6 L498 258" fill="none" stroke="#fff" stroke-width="4.3" stroke-linecap="round" stroke-linejoin="round"/>
<path d="M539 353 H567 M553 339 V367" stroke="#2b88ab" stroke-width="3.6" fill="none"/>
<path d="M3053.6 182.2 A15 15 0 0 1 3045.9 156.9" fill="none" stroke="#fff" stroke-width="5.4" stroke-linecap="round" stroke-linejoin="round"/>
<path d="M3038.5 153.2 H3049.6 V164.6" fill="none" stroke="#fff" stroke-width="5.4" stroke-linecap="round" stroke-linejoin="round"/>
<path d="M3059.2 152.8 A15 15 0 0 1 3067.1 178.1" fill="none" stroke="#fff" stroke-width="5.4" stroke-linecap="round" stroke-linejoin="round"/>
<path d="M3063 170 V181.8 H3074.6" fill="none" stroke="#fff" stroke-width="5.4" stroke-linecap="round" stroke-linejoin="round"/>
<path d="M3147.81 152.62 L3149.94 148.07 L3155.06 148.07 L3157.19 152.62 L3159.70 153.66 L3164.43 151.95 L3168.05 155.57 L3166.34 160.30 L3167.38 162.81 L3171.93 164.94 L3171.93 170.06 L3167.38 172.19 L3166.34 174.70 L3168.05 179.43 L3164.43 183.05 L3159.70 181.34 L3157.19 182.38 L3155.06 186.93 L3149.94 186.93 L3147.81 182.38 L3145.30 181.34 L3140.57 183.05 L3136.95 179.43 L3138.66 174.70 L3137.62 172.19 L3133.07 170.06 L3133.07 164.94 L3137.62 162.81 L3138.66 160.30 L3136.95 155.57 L3140.57 151.95 L3145.30 153.66 Z" fill="#fff" stroke="#fff" stroke-width="2" stroke-linejoin="round"/>
<circle cx="3152.5" cy="167.5" r="7.6" fill="#2b88ab"/>
<path d="M3231.5 164 V151.5 A2.5 2.5 0 0 1 3234 149 H3262.8 A2.5 2.5 0 0 1 3265.3 151.5 V164 Z" fill="#fff"/>
<rect x="3227.75" y="166.5" width="41.3" height="3.3" rx="1" fill="#fff"/>
<path d="M3233 171.5 V183 A1.8 1.8 0 0 0 3234.8 184.8 H3262 A1.8 1.8 0 0 0 3263.8 183 V171.5" fill="none" stroke="#fff" stroke-width="2.9"/>
<rect x="3323.75" y="170.4" width="11.9" height="17.6" rx="1.5" fill="#fff"/>
<rect x="3338.75" y="146.9" width="11.7" height="41.1" rx="1.5" fill="#fff"/>
<rect x="3353.1" y="158.75" width="11.9" height="29.25" rx="1.5" fill="#fff"/>
<rect x="3421" y="163.2" width="38.75" height="24.8" fill="#fff"/>
<path d="M3418 158 L3440.6 180.4 L3463.2 158 Z" fill="#2b88ab"/>
<path d="M3423 161 L3440.6 177.4 L3458.2 161 H3452.8 L3440.6 172.3 L3428.4 161 Z" fill="#fff"/>
<path d="M3434.6 175.6 L3421.6 187.4 M3446.6 175.6 L3459.4 187.4" fill="none" stroke="#2b88ab" stroke-width="2.4"/>
<path d="M3437.3 148.4 A1.4 1.4 0 0 1 3438.7 147 H3443.6 A1.4 1.4 0 0 1 3445 148.4 V158 H3450.6 L3440.6 169.8 L3431.2 158 H3437.3 Z" fill="#fff"/>
<path d="M3521.2 152.8 L3523 150.6 A2 2 0 0 1 3524.6 149.75 H3548 A2 2 0 0 1 3549.6 150.6 L3551.3 152.8 Z" fill="#fff"/>
<rect x="3516" y="155" width="41.3" height="30.4" rx="4.5" fill="#fff"/>
<path d="M3536.3 179.2 V162 M3530.2 167.6 L3536.3 161.2 L3542.6 167.6" fill="none" stroke="#2b88ab" stroke-width="2.6" stroke-linecap="round" stroke-linejoin="round"/>
<path d="M3643.1 153 L3652.6 163.8 H3646.9 V173.6 A1.6 1.6 0 0 1 3645.3 175.2 H3640.8 A1.6 1.6 0 0 1 3639.2 173.6 V163.8 H3633.7 Z" fill="#fff" stroke="#fff" stroke-width="1" stroke-linejoin="round"/>
<rect x="3624" y="178.4" width="38" height="6.6" rx="3.3" fill="#fff"/>
</svg>
</body></html>
